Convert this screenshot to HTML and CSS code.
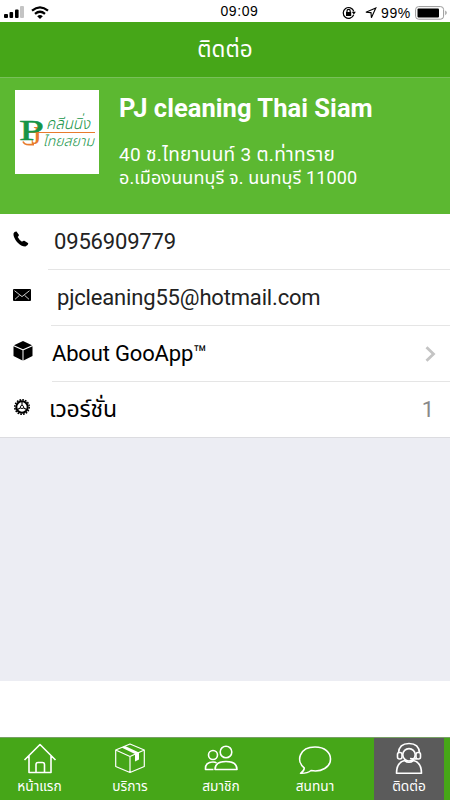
FILE: index.html
```
<!DOCTYPE html>
<html lang="th">
<head>
    <meta charset="UTF-8">
    <meta name="viewport" content="width=device-width, initial-scale=1.0">
    <title>ติดต่อ</title>
    <link rel="stylesheet" href="styles.css">
</head>
<body>
    <div class="status-bar">
        <div class="status-left">
            <svg width="20" height="12" viewBox="0 0 20 12">
                <rect x="0" y="8" width="4" height="4" rx="1"/>
                <rect x="5.5" y="6" width="3.6" height="6" rx="1"/>
                <rect x="11" y="3.5" width="3.6" height="8.5" rx="1"/>
                <rect x="16" y="0" width="4" height="12" rx="1" fill="#c4c4c4"/>
            </svg>
            <svg class="wifi" width="18" height="13" viewBox="0 0 18 13" fill="none" stroke="#000" stroke-width="2.2">
                <path d="M1 4.6Q9-2 17 4.6M4 7.9Q9 3.6 14 7.9"/>
                <path d="M6.2 10.2Q9 7.6 11.8 10.2L9 13z" fill="#000" stroke="none"/>
            </svg>
        </div>
        <div class="time">09:09</div>
        <div class="status-right">
            <svg width="14" height="14" viewBox="0 0 14 14" fill="none" stroke="#000" stroke-width="1.2">
                <path d="M11.7 8.8A5.4 5.4 0 1 1 11.8 5.4"/>
                <path d="M9.7 5.8h4.2l-2 2.8z" fill="#000" stroke="none"/>
                <path d="M5 6.5V5a1.6 1.6 0 0 1 3.2 0v1.5"/>
                <rect x="4" y="6" width="5.2" height="4" fill="#000" stroke="none"/>
            </svg>
            <svg class="location" width="12" height="12" viewBox="0 0 12 12" fill="none" stroke="#000" stroke-width="1.1">
                <path d="M.9 5.2L10.8 1 6.4 10.7 6 5.6z"/>
            </svg>
            <span class="percent">99%</span>
            <svg width="33" height="14" viewBox="0 0 33 14">
                <rect x=".6" y=".6" width="28" height="12.6" rx="3" fill="#fff" stroke="#999"/>
                <rect x="2.5" y="2.4" width="21.5" height="9" rx="1"/>
                <path d="M30.4 4.5q2.4 2.2 0 4.8z" fill="#888"/>
            </svg>
        </div>
    </div>

    <header class="nav-bar">
        <h1>ติดต่อ</h1>
    </header>

    <section class="profile">
        <svg class="logo" width="84" height="84" viewBox="0 0 84 84">
            <rect width="84" height="84" fill="#fff"/>
            <text class="logo-j" x="16" y="54" textLength="10" lengthAdjust="spacingAndGlyphs">J</text>
            <path d="M13 42.5H80" stroke="#e87b2d" stroke-width="1"/>
            <path d="M8 51.5Q9 54.6 14 54.6H19" fill="none" stroke="#e87b2d" stroke-width="1.6"/>
            <text class="logo-p" x="4" y="50" textLength="25" lengthAdjust="spacingAndGlyphs">P</text>
            <text class="logo-thai" x="31" y="38.5" textLength="44" lengthAdjust="spacingAndGlyphs">คลีนนิ่ง</text>
            <text class="logo-thai logo-thai-small" x="28" y="56" textLength="51" lengthAdjust="spacingAndGlyphs">ไทยสยาม</text>
        </svg>
        <div class="profile-info">
            <h2>PJ cleaning Thai Siam</h2>
            <p><span class="address-1">40 ซ.ไทยานนท์ 3 ต.ท่าทราย</span><br><span class="address-2">อ.เมืองนนทบุรี จ. นนทบุรี 11000</span></p>
        </div>
    </section>

    <main class="list">
        <div class="row phone">
            <svg class="row-icon" width="16" height="16" viewBox="0 0 16 16">
                <path d="M.5 2.5Q1.3.2 3.5.4L6 4Q5.8 5.2 4.7 6 6 8.7 9 10.7 10.2 9.6 11.3 9.8L15.3 12.2Q15 15 12.4 15.5 8.2 15.5 4 10.9 0 6 .5 2.5z"/>
            </svg>
            <div class="row-body"><span class="row-text">0956909779</span></div>
        </div>
        <div class="row mail">
            <svg class="row-icon" width="18" height="12" viewBox="0 0 18 12">
                <rect width="18" height="12" rx="1"/>
                <path d="M1.5 1.7L9 7.6 16.5 1.7M2 10.3L6.4 6.4M16 10.3L11.6 6.4" fill="none" stroke="#fff" stroke-width=".8"/>
            </svg>
            <div class="row-body"><span class="row-text">pjcleaning55@hotmail.com</span></div>
        </div>
        <div class="row about">
            <svg class="row-icon" width="20" height="20" viewBox="0 0 20 20">
                <path d="M10 0L19 4.2 10 8.3 1 4.2zM.5 5.2L9.5 9.3V19.5L.5 15zM19.5 5.2L10.5 9.3V19.5L19.5 15z"/>
            </svg>
            <div class="row-body">
                <span class="row-text">About GooApp™</span>
                <svg class="chevron" width="11" height="16" viewBox="0 0 11 16">
                    <path d="M1.5 1.3L8.5 8 1.5 14.7" fill="none" stroke="#c4c4c4" stroke-width="2.8"/>
                </svg>
            </div>
        </div>
        <div class="row version">
            <svg class="row-icon" width="16" height="16" viewBox="0 0 16 16" fill="none" stroke="#000">
                <circle cx="8" cy="8" r="7.2" stroke-width="1.6" stroke-dasharray="1.7 1.13"/>
                <circle cx="8" cy="8" r="5.7" stroke-width="2"/>
                <circle cx="8" cy="8" r="1.6" stroke-width=".9"/>
                <path d="M8 6.4V3M9.4 8.8L12.5 10.5M6.6 8.8L3.5 10.5" stroke-width="1.1"/>
            </svg>
            <div class="row-body">
                <span class="row-text">เวอร์ชั่น</span>
                <span class="value">1</span>
            </div>
        </div>
    </main>

    <div class="filler"></div>

    <nav class="tab-bar">
        <a class="tab home">
            <svg width="34" height="34" viewBox="0 0 34 34">
                <path d="M1.5 18L17 2.5 32.5 18M6 14V30.5H28V14M13 30.5V22.5Q13 20.5 15 20.5H19.5Q21.5 20.5 21.5 22.5V30.5"/>
            </svg>
            <span>หน้าแรก</span>
        </a>
        <a class="tab service">
            <svg width="34" height="34" viewBox="0 0 34 34">
                <path d="M17 2L31.3 8V24.5L17 30.5 2.7 24.5V8zM2.7 8L17 14.5 31.3 8M17 14.5V30.5" stroke-width="1.2"/>
                <path d="M8.5 5.5L12 4 26 10.5V17.5L22 19.5V12z" fill="#fff" stroke="none"/>
            </svg>
            <span>บริการ</span>
        </a>
        <a class="tab member">
            <svg width="34" height="34" viewBox="0 0 34 34">
                <circle cx="22" cy="10" r="5.8"/>
                <circle cx="9" cy="13" r="4.5"/>
                <path d="M11 27.5Q11 19.5 22 19.5T33 27.5zM9.5 27.5H1.5Q1 20 9 20 11.5 20 12.5 21"/>
            </svg>
            <span>สมาชิก</span>
        </a>
        <a class="tab chat">
            <svg width="34" height="34" viewBox="0 0 34 34">
                <path d="M2.5 31.3Q6.5 28.5 6.2 25.8C-2.5 19 1.5 5 17 5 27 5 32.5 10.5 32.5 17 32.5 25 23.5 30.5 13 28.5Q9.5 31.5 2.5 31.3z"/>
            </svg>
            <span>สนทนา</span>
        </a>
        <a class="tab contact active">
            <svg width="34" height="34" viewBox="0 0 34 34">
                <path d="M6.5 11Q7 1.5 17 1.5T27.5 11"/>
                <rect x="5.5" y="10.5" width="4.5" height="6.5" rx="2"/>
                <rect x="24" y="10.5" width="4.5" height="6.5" rx="2"/>
                <circle cx="17" cy="12.8" r="6.2"/>
                <path d="M4.5 31.3Q4.5 20.5 12.5 18.5 17 22 21.5 18.5 29.5 20.5 29.5 31.3zM25 16.5Q23 17.5 18 16.5"/>
            </svg>
            <span>ติดต่อ</span>
        </a>
    </nav>
</body>
</html>
```
FILE: styles.css
```
* {
    box-sizing: border-box;
    margin: 0;
    padding: 0;
}

body {
    width: 450px;
    height: 800px;
    overflow: hidden;
    display: flex;
    flex-direction: column;
    background-color: #fff;
    font-family: Roboto, "Noto Sans Thai", sans-serif;
    color: #000;
}

svg {
    display: block;
    flex-shrink: 0;
}

.status-bar {
    height: 22px;
    display: grid;
    grid-template-columns: 170px 139px 1fr;
    align-items: center;
    flex-shrink: 0;
}

.status-left {
    display: flex;
    padding: 3px 0 0 4px;
}

.wifi {
    margin-left: 7px;
}

.time {
    text-align: center;
    font: 14px "Liberation Sans", sans-serif;
    letter-spacing: 0.6px;
}

.status-right {
    display: flex;
    align-items: center;
    padding: 3px 0 0 33px;
}

.location {
    margin-left: 9px;
}

.percent {
    width: 34px;
    margin-left: 4px;
    font: 14px "Liberation Sans", sans-serif;
    letter-spacing: 0.6px;
}

.nav-bar {
    height: 56px;
    background-color: #46a618;
    border-bottom: 1px solid #78c05a;
    display: flex;
    justify-content: center;
    align-items: center;
    flex-shrink: 0;
}

h1 {
    color: #fff;
    font-size: 22.5px;
    font-weight: 400;
}

.profile {
    height: 136px;
    background-color: #5cb831;
    color: #fff;
    display: flex;
    padding: 12px 0 0 15px;
    flex-shrink: 0;
}

.profile-info {
    padding: 3px 0 0 20px;
    white-space: nowrap;
}

h2 {
    font-size: 25.5px;
    line-height: 30px;
    font-weight: 700;
    letter-spacing: 0.05px;
}

p {
    margin-top: 20px;
    font-size: 18px;
    line-height: 23px;
}

.address-1 {
    font-size: 19px;
    letter-spacing: 0.3px;
}

.address-2 {
    letter-spacing: 0.12px;
}

.logo-p,
.logo-j {
    font-family: "Liberation Serif", serif;
    font-size: 29px;
    fill: #159447;
}

.logo-j {
    font-size: 25px;
    font-weight: 700;
    fill: #e87b2d;
}

.logo-p {
    stroke: #159447;
    stroke-width: 0.5px;
}

.logo-thai {
    font-size: 16px;
    font-style: italic;
    font-weight: 300;
    fill: #159447;
}

.logo-thai-small {
    font-size: 14px;
}

.list {
    flex-shrink: 0;
}

.row {
    height: 56px;
    display: flex;
    padding-left: 13px;
}

.row-icon {
    margin-top: 17px;
}

.row-body {
    flex: 1;
    height: 56px;
    display: flex;
    justify-content: space-between;
    align-items: center;
    padding-bottom: 1px;
    border-bottom: 1px solid #e5e5e5;
    font-size: 22px;
    letter-spacing: -0.17px;
    white-space: nowrap;
}

.phone .row-body {
    margin-left: 19px;
    padding-left: 6px;
    color: #222;
}

.mail .row-icon {
    margin-top: 19px;
}

.mail .row-body {
    margin-left: 20px;
    padding-left: 6px;
    color: #222;
}

.about .row-icon {
    margin-top: 15px;
}

.about .row-body {
    margin-left: 19px;
    padding-right: 14px;
}

.chevron {
    margin-top: 1px;
}

.version {
    border-bottom: 1px solid #dcdce0;
}

.version .row-icon {
    margin: 17px 0 0 1px;
}

.version .row-body {
    margin-left: 19px;
    padding-right: 16px;
    border-bottom: none;
}

.version .row-text {
    font-size: 23px;
}

.value {
    color: #888;
}

.filler {
    height: 243px;
    background-color: #ecedf3;
    flex-shrink: 0;
}

.tab-bar {
    height: 63px;
    margin-top: auto;
    padding-right: 6px;
    display: grid;
    grid-template-columns: 79px 102px 80px 113px 70px;
    background-color: #46a618;
    border-top: 1px solid #78a066;
    flex-shrink: 0;
}

.tab {
    display: flex;
    flex-direction: column;
    align-items: center;
    padding-top: 4px;
    color: #fff;
    font-size: 13.7px;
    line-height: 20px;
    white-space: nowrap;
}

.tab svg {
    fill: none;
    stroke: #fff;
    stroke-width: 1.6;
    stroke-linejoin: round;
}

.chat {
    padding-right: 5px;
}

.active {
    background-color: #5b5b5b;
}
```
